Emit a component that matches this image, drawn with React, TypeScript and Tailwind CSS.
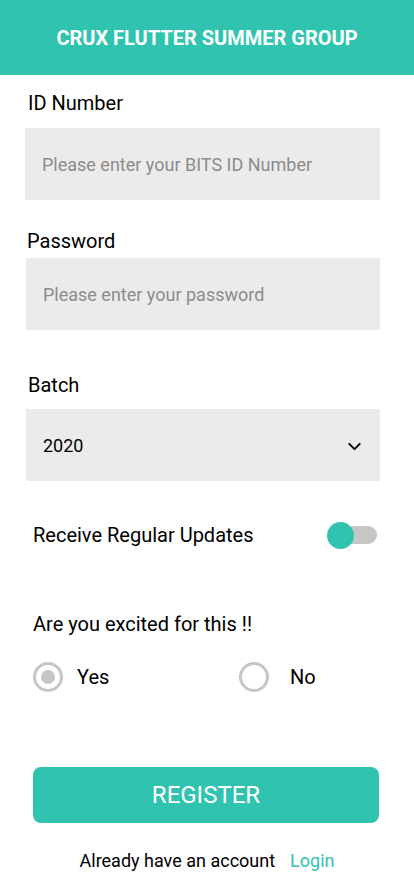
import { ChevronDown } from "lucide-react"

export default function App() {
  return (
    <div className="min-h-screen bg-white font-['Roboto',sans-serif] text-black">
      <div className="h-[75px] bg-[#30c4b0] flex items-center justify-center">
        <h1 className="text-[20px] font-bold text-white">CRUX FLUTTER SUMMER GROUP</h1>
      </div>

      <div className="pl-[25px] pr-[34px]">
        <p className="mt-[16px] ml-[3px] text-[20px] leading-6">ID Number</p>
        <div className="mt-[13px] h-[72px] bg-[#ebebeb] flex items-center pl-[17px]">
          <span className="text-[18px] text-[#8c8c8c]">Please enter your BITS ID Number</span>
        </div>

        <p className="mt-[29px] ml-[2px] text-[20px] leading-6">Password</p>
        <div className="mt-[5px] ml-px h-[72px] bg-[#ebebeb] flex items-center pl-[17px]">
          <span className="text-[18px] text-[#8c8c8c]">Please enter your password</span>
        </div>

        <p className="mt-[43px] ml-[3px] text-[20px] leading-6">Batch</p>
        <div className="mt-[12px] ml-px h-[72px] bg-[#ebebeb] flex items-center justify-between pl-[17px] pr-[15px]">
          <span className="text-[18px]">2020</span>
          <ChevronDown className="w-[21px] h-[21px] mt-[3px]" strokeWidth={2.2} />
        </div>
      </div>

      <div className="px-[33px]">
        <div className="mt-[40px] h-[28px] flex items-center justify-between">
          <span className="text-[20px]">Receive Regular Updates</span>
          <div className="relative w-[50px] h-[28px] mr-[4px]">
            <div className="absolute left-[8px] right-0 top-[5px] h-[18px] rounded-full bg-[#c6c6c6]" />
            <div className="absolute left-0 top-px w-[27px] h-[27px] rounded-full bg-[#30c4b0]" />
          </div>
        </div>

        <p className="mt-[63px] text-[20px] leading-6">Are you excited for this !!</p>

        <div className="mt-[26px] h-[30px] flex items-center">
          <div className="flex items-center w-[206px]">
            <div className="w-[30px] h-[30px] rounded-full border-[3px] border-[#c6c6c6] flex items-center justify-center">
              <div className="w-[14px] h-[14px] rounded-full bg-[#c6c6c6]" />
            </div>
            <span className="ml-[14px] text-[20px]">Yes</span>
          </div>
          <div className="flex items-center">
            <div className="w-[30px] h-[30px] rounded-full border-[3px] border-[#c6c6c6]" />
            <span className="ml-[21px] text-[20px]">No</span>
          </div>
        </div>

        <button className="mt-[75px] w-[346px] h-[56px] rounded-[8px] bg-[#30c4b0] text-white text-[24px] flex items-center justify-center">
          REGISTER
        </button>

        <div className="mt-[26px] flex items-center justify-center gap-[15px] text-[18px] leading-6">
          <span>Already have an account</span>
          <span className="text-[#30c4b0]">Login</span>
        </div>
      </div>
    </div>
  )
}
